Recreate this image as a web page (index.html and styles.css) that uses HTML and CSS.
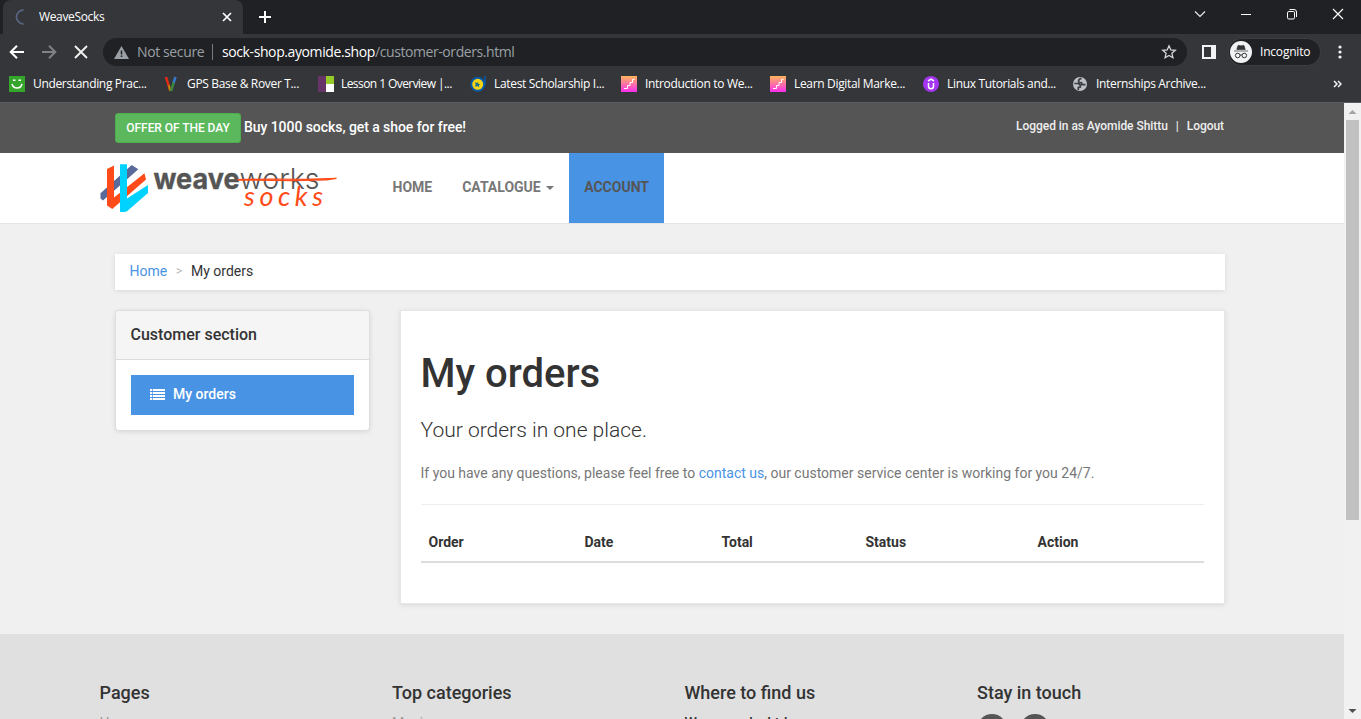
FILE: index.html
```html
<!DOCTYPE html>
<html lang="en">
<head>
<meta charset="utf-8">
<title>WeaveSocks</title>
<link rel="stylesheet" href="styles.css">
</head>
<body>
<div class="browser">
  <div class="titlebar">
    <div class="tab">
      <svg class="spinner" width="16" height="16" viewBox="0 0 16 16"><path d="M8.500 1A7 7 0 0 0 8.500 15" fill="none" stroke="#56627d" stroke-width="1.800"/></svg>
      <span class="tab-title">WeaveSocks</span>
      <svg width="10" height="10" viewBox="0 0 10 10"><path d="M1 1l8 8M9 1l-8 8" stroke="#fff" stroke-width="1.700"/></svg>
    </div>
    <svg class="new-tab" width="12" height="12" viewBox="0 0 12 12"><path d="M6 0v12M0 6h12" stroke="#fff" stroke-width="2"/></svg>
    <div class="window-controls">
      <svg width="12" height="12" viewBox="0 0 12 12"><path d="M1 3.500l5 5 5-5" fill="none" stroke="#eee" stroke-width="1.100"/></svg>
      <svg width="12" height="12" viewBox="0 0 12 12"><path d="M1 6.500h10" stroke="#fff"/></svg>
      <svg width="12" height="12" viewBox="0 0 12 12"><rect x="1.500" y="3.500" width="7" height="7.500" rx="1.300" fill="none" stroke="#fff"/><path d="M3.500 1.500h4.500a2.500 2.500 0 0 1 2.500 2.500v5" fill="none" stroke="#fff"/></svg>
      <svg width="12" height="12" viewBox="0 0 12 12"><path d="M1 1l10 10M11 1L1 11" stroke="#fff" stroke-width="1.200"/></svg>
    </div>
  </div>
  <div class="toolbar">
    <svg width="16" height="16" viewBox="0 0 16 16"><path d="M15 8H2M8 1.700L1.700 8 8 14.300" fill="none" stroke="#fff" stroke-width="2"/></svg>
    <svg width="16" height="16" viewBox="0 0 16 16"><path d="M1 8h13M8 1.700L14.300 8 8 14.300" fill="none" stroke="#818286" stroke-width="2"/></svg>
    <svg width="16" height="16" viewBox="0 0 16 16"><path d="M2 2l12 12M14 2L2 14" stroke="#f1f1f1" stroke-width="1.900"/></svg>
    <div class="omnibox">
      <svg width="15" height="13" viewBox="0 0 15 13"><path d="M7.500 0L15 13H0z" fill="#9aa0a6"/><path d="M7.500 4.500v4M7.500 9.500v1.600" stroke="#202124" stroke-width="1.500"/></svg>
      <span class="not-secure">Not secure</span>
      <span class="divider"></span>
      <span class="host">sock-shop.ayomide.shop</span><span class="path">/customer-orders.html</span>
      <svg class="star" width="16" height="16" viewBox="0 0 16 16"><path d="M8 1.800l1.800 4.100 4.500.4-3.400 3 1 4.400L8 11.400l-3.900 2.300 1-4.400-3.400-3 4.500-.4z" fill="none" stroke="#d5d7da" stroke-width="1.300"/></svg>
    </div>
    <svg class="panel-icon" width="14" height="14" viewBox="0 0 14 14"><rect width="14" height="14" fill="#f1f3f4"/><path d="M2 2h7v10H2z" fill="#35363a"/></svg>
    <div class="incognito">
      <svg width="22" height="22" viewBox="0 0 22 22"><circle cx="11" cy="11" r="11" fill="#f1f3f4"/><path d="M6.800 8.500l1-3.500q.5-1 1.500-.6l1.700.5 1.700-.5q1-.4 1.500.6l1 3.500zM4 10h14" fill="#35363a" stroke="#35363a" stroke-width=".7"/><g fill="none" stroke="#35363a"><circle cx="7.700" cy="14.500" r="2.300"/><circle cx="14.300" cy="14.500" r="2.300"/><path d="M10 14.200q1-.8 2 0"/></g></svg>
      <span>Incognito</span>
    </div>
    <svg class="menu-dots" width="4" height="14" viewBox="0 0 4 14" fill="#f1f3f4"><circle cx="2" cy="2" r="1.600"/><circle cx="2" cy="7" r="1.600"/><circle cx="2" cy="12" r="1.600"/></svg>
  </div>
  <div class="bookmarks">
    <div class="bookmark"><svg width="16" height="16" viewBox="0 0 16 16"><rect width="16" height="16" fill="#36a52b"/><g fill="none" stroke="#fff" stroke-width="1.500"><path d="M4 4.300h2.500M9.500 4.300H12M3 8q1 4 5 4T13 8"/></g></svg><span>Understanding Prac...</span></div>
    <div class="bookmark"><svg width="16" height="16" viewBox="0 0 16 16"><path d="M3 1l4 13" stroke="#e52b13" stroke-width="2.500"/><path d="M5.800 9l1.500 6" stroke="#ba840b" stroke-width="2"/><path d="M12.500 1l-2 6" stroke="#3979c7" stroke-width="2.500"/><path d="M10.700 6.500L8 15" stroke="#3c8740" stroke-width="2.500"/></svg><span>GPS Base &amp; Rover T...</span></div>
    <div class="bookmark tight"><svg width="16" height="16" viewBox="0 0 16 16"><path d="M0 0h8v16H0z" fill="#673467"/><path d="M8 0h8v8H8z" fill="#96cb29"/><path d="M8 8h8v8H8z" fill="#fff"/></svg><span>Lesson 1 Overview |...</span></div>
    <div class="bookmark"><svg width="16" height="16" viewBox="0 0 16 16"><path d="M15 0v9" stroke="#075ba8" stroke-width="1.500"/><circle cx="7.700" cy="8.300" r="6.500" fill="#f7d512" stroke="#075ba8" stroke-width="2"/><path d="M5 6l2 1 1-1 .5 2 2 .3-1.700 1 .5 2L7 10l-2 1 .6-2.500z" fill="#187195"/></svg><span>Latest Scholarship I...</span></div>
    <div class="bookmark"><svg width="16" height="16" viewBox="0 0 16 16"><defs><linearGradient id="steps" x2="0" y2="1"><stop stop-color="#ffb65d"/><stop offset="1" stop-color="#fb2cee"/></linearGradient></defs><rect width="16" height="16" fill="url(#steps)"/><path d="M3 12.500h3.500v-3H9v-3h2.500v-3h2" fill="none" stroke="#fff"/></svg><span>Introduction to We...</span></div>
    <div class="bookmark"><svg width="16" height="16" viewBox="0 0 16 16"><rect width="16" height="16" fill="url(#steps)"/><path d="M3 12.500h3.500v-3H9v-3h2.500v-3h2" fill="none" stroke="#fff"/></svg><span>Learn Digital Marke...</span></div>
    <div class="bookmark"><svg width="16" height="16" viewBox="0 0 16 16"><circle cx="8" cy="8" r="8" fill="#a435f0"/><path d="M5.500 7v3.300q0 2.500 2.500 2.500t2.500-2.500V7M5 5l3-1.800L11 5" fill="none" stroke="#fff" stroke-width="1.500"/></svg><span>Linux Tutorials and...</span></div>
    <div class="bookmark"><svg width="16" height="16" viewBox="0 0 16 16"><circle cx="8" cy="8" r="7" fill="#bdc1c6"/><path d="M9.500 2.300Q6.500 3 6.500 5.500q.5 1.500 3 1.200l.5 2h3.500M2.300 7.500h4l2 1.500v2l-2 .5V14" fill="none" stroke="#3c3d41" stroke-width="1.700"/></svg><span>Internships Archive...</span></div>
    <svg class="more" width="9" height="8" viewBox="0 0 9 8"><path d="M1 1l3 3-3 3M5 1l3 3-3 3" fill="none" stroke="#f1f3f4" stroke-width="1.500"/></svg>
  </div>
</div>

<div class="viewport">
  <div class="page">
    <div class="topbar">
      <div class="container topbar-row">
        <div class="offer"><a class="btn-offer">OFFER OF THE DAY</a><span>Buy 1000 socks, get a shoe for free!</span></div>
        <div class="account-links"><span>Logged in as Ayomide Shittu</span><span>|</span><span>Logout</span></div>
      </div>
    </div>
    <nav class="navbar">
      <svg class="logo" width="240" height="52" viewBox="0 0 240 52">
        <path d="M.5 33.300L31.700 5 38.300 9.300 3 40.500 .5 38.500z" fill="#59699a"/>
        <path d="M7 9L14 5.500V37.500L44.500 13.200 46 19.500 12.300 49 7 45.500z" fill="#ff4b19"/>
        <path d="M20 4.200h7V38.500L48 25v8L28.500 50Q27 52 24 52H20z" fill="#00d2ff"/>
        <text class="logo-bold" x="53.500" y="28.600" textLength="86" lengthAdjust="spacingAndGlyphs">weave</text>
        <text class="logo-light" x="139.500" y="28.600" textLength="80" lengthAdjust="spacingAndGlyphs">works</text>
        <text class="logo-socks" x="144" y="45.500" textLength="79" lengthAdjust="spacing">socks</text>
        <path d="M138 19.500L170 19l35 .3 31.500-1-10 1.500-35 .8-53-.5z" fill="none" stroke="#ff4b19" stroke-width="1.200"/>
      </svg>
      <div class="nav-items">
        <a>HOME</a>
        <a>CATALOGUE <i class="caret"></i></a>
        <a class="active">ACCOUNT</a>
      </div>
    </nav>
    <main class="container">
      <div class="breadcrumb"><a>Home</a><i>&gt;</i><span>My orders</span></div>
      <div class="columns">
        <aside class="panel">
          <h3>Customer section</h3>
          <div class="panel-body">
            <a class="pill"><svg width="15" height="11" viewBox="0 0 15 11"><path d="M0 1h2.300M3 1h12M0 4h2.300M3 4h12M0 7h2.300M3 7h12M0 10h2.300M3 10h12" stroke="#fff" stroke-width="2"/></svg>My orders</a>
          </div>
        </aside>
        <section class="box">
          <h1>My orders</h1>
          <p class="lead">Your orders in one place.</p>
          <p class="muted">If you have any questions, please feel free to <a>contact us</a>, our customer service center is working for you 24/7.</p>
          <hr>
          <table>
            <thead><tr><th>Order</th><th>Date</th><th>Total</th><th>Status</th><th>Action</th></tr></thead>
          </table>
        </section>
      </div>
    </main>
    <footer class="footer">
      <div class="footer-col"><h4>Pages</h4><a>Home</a></div>
      <div class="footer-col"><h4>Top categories</h4><a>Magic</a></div>
      <div class="footer-col"><h4>Where to find us</h4><strong>Weaveworks Ltd.</strong></div>
      <div class="footer-col"><h4>Stay in touch</h4><div class="social"><i></i><i></i></div></div>
    </footer>
  </div>
  <div class="scrollbar">
    <svg width="17" height="17" viewBox="0 0 17 17"><path d="M4.500 11h8l-4-4z" fill="#a3a3a3"/></svg>
    <div class="thumb"></div>
    <svg class="down" width="17" height="17" viewBox="0 0 17 17"><path d="M4.500 7h8l-4 4z" fill="#505050"/></svg>
  </div>
</div>
</body>
</html>
```

FILE: styles.css
```css
* { box-sizing: border-box; }
body { margin: 0; width: 1361px; height: 719px; overflow: hidden; display: flex; flex-direction: column; font: 14px/20px Roboto, sans-serif; color: #333; }
svg { display: block; flex: none; }
h1, h3, h4, p { margin: 0; font-weight: 500; }

/* Browser frame */
.browser { height: 103px; flex: none; background: #35363a; border-bottom: 1px solid #5b5c5f; font-family: "Open Sans", sans-serif; color: #fff; white-space: nowrap; }
.titlebar { height: 34px; display: flex; align-items: flex-start; background: #202124; padding-left: 3px; }
.tab { width: 240px; height: 34px; display: flex; align-items: center; padding: 0 11px 0 12px; background: #35363a; border-radius: 8px 8px 0 0; font-size: 12px; }
.spinner { margin-right: 8px; }
.tab-title { flex: 1; letter-spacing: -.35px; }
.new-tab { margin: 11px 0 0 16px; }
.window-controls { display: flex; gap: 34px; margin: 8px 17px 0 auto; }
.toolbar { height: 35px; display: flex; align-items: center; padding: 1px 19px 0 9px; }
.toolbar > svg + svg { margin-left: 16px; }
.omnibox { width: 1084px; height: 28px; margin-left: 14px; padding: 0 10px 0 11px; display: flex; align-items: center; border-radius: 14px; background: #202124; font-size: 14px; flex: none; }
.not-secure { color: #9aa0a6; margin-left: 8px; width: 67px; letter-spacing: -.38px; }
.divider { width: 1px; height: 16px; background: #777a7e; margin: 0 9px 0 8px; }
.host { width: 153px; letter-spacing: -.4px; }
.path { color: #9aa0a6; letter-spacing: -.42px; }
.star { margin-left: auto; }
.panel-icon { margin-left: 15px; }
.incognito { display: flex; align-items: center; width: 91px; height: 26px; margin-left: 13px; padding-left: 1px; gap: 8px; border-radius: 13px; background: #202124; font-size: 12px; letter-spacing: -.2px; box-shadow: 0 0 0 1px #3c3d41; }
.menu-dots { margin-left: auto; }
.bookmarks { display: grid; grid-template-columns: 154px 155px 152px 151px 149px 153px 149px 1fr 9px; align-items: center; height: 30px; padding: 0 19px 0 9px; font-size: 12px; letter-spacing: -.33px; }
.bookmark { display: flex; align-items: center; gap: 8px; }
.tight { letter-spacing: -.57px; gap: 7px; }

/* Page */
.viewport { flex: 1; min-height: 0; display: flex; background: #f0f0f0; }
.page { width: 1344px; overflow: hidden; }
.container { width: 1110px; margin-left: 115px; }
.topbar { height: 50px; background: #555; color: #fff; }
.topbar-row { display: flex; justify-content: space-between; padding-top: 10px; }
.offer { display: flex; align-items: flex-start; gap: 3px; height: 30px; font-weight: 500; line-height: 28px; letter-spacing: -.06px; }
.btn-offer { display: block; width: 126px; height: 30px; line-height: 28px; text-align: center; font-size: 12px; border: 1px solid #4cae4c; border-radius: 3px; background: #5cb85c; }
.account-links { display: flex; gap: 8px; font-size: 12px; font-weight: 500; line-height: 26px; color: #eee; letter-spacing: -.05px; padding-right: 1px; }
.navbar { height: 71px; display: flex; background: #fff; border-bottom: 1px solid #e4e4e4; }
.logo { margin: 7px 0 0 100px; }
.logo-bold { font: 700 29px Inter, sans-serif; fill: #555; stroke: #555; stroke-width: .4px; }
.logo-light { font: 300 29px Inter, sans-serif; fill: #555; }
.logo-socks { font: italic 400 27px Lato, sans-serif; fill: #ff4b19; }
.nav-items { display: flex; margin-left: 37px; }
.nav-items a { height: 70px; padding: 0 14.5px 0 15.5px; line-height: 69px; font-weight: 700; color: #777; }
.nav-items .active { background: #4993e4; color: #555; }
.caret { display: inline-block; border: 4px solid transparent; border-top-color: #777; border-bottom: 0; vertical-align: middle; margin-left: 2px; }
.breadcrumb { height: 36px; margin: 30px 0 20px; padding-left: 14.5px; display: flex; background: #fff; line-height: 34px; box-shadow: 0 1px 5px rgba(0,0,0,.1); }
.breadcrumb a, .muted a { color: #4993e4; }
.breadcrumb i { font-style: normal; font-size: 13px; color: #bbb; margin: 0 8.5px; }
.columns { display: flex; justify-content: space-between; align-items: flex-start; }
.panel { width: 255px; height: 121px; border: 1px solid #ddd; border-radius: 4px; background: #fff; box-shadow: 0 1px 5px rgba(0,0,0,.1); }
.panel h3 { height: 49px; padding-left: 14.5px; line-height: 47px; font-size: 16px; background: #f5f5f5; border-bottom: 1px solid #ddd; border-radius: 3px 3px 0 0; }
.panel-body { padding: 15px; }
.pill { display: flex; align-items: center; gap: 8px; height: 40px; padding: 0 0 2px 19px; background: #4993e4; color: #fff; font-weight: 500; }
.box { width: 825px; height: 294px; padding: 40px 20px 0 19.5px; border: 1px solid #e6e6e6; background: #fff; box-shadow: 0 1px 5px rgba(0,0,0,.1); }
.box h1 { font-size: 40px; line-height: 46px; }
.lead { font-size: 21px; line-height: 30px; font-weight: 300; margin-top: 18px; }
.muted { color: #777; margin-top: 18px; font-weight: 400; }
hr { margin: 21px 0 20px; border: 0; border-top: 1px solid #eee; }
table { width: 100%; border-collapse: collapse; table-layout: fixed; }
th { height: 37px; padding: 0 8px 2px; text-align: left; font-weight: 700; border-bottom: 2px solid #ddd; }
th:nth-child(1) { width: 156px; }
th:nth-child(2) { width: 137px; }
th:nth-child(3) { width: 144px; }
th:nth-child(4) { width: 172px; }
.footer { display: grid; grid-template-columns: repeat(4, 292.5px); height: 90px; margin-top: 30px; padding: 49px 0 0 99.5px; background: #e0e0e0; }
.footer h4 { font-size: 18px; line-height: 20px; margin-bottom: 10px; }
.footer a { color: #999; }
.footer strong { font-weight: 500; }
.footer a, .footer strong { display: block; }
.social { display: flex; gap: 13px; padding-top: 1px; }
.social i { width: 30px; height: 30px; border-radius: 50%; background: #555; }
.scrollbar { width: 17px; display: flex; flex-direction: column; background: #f1f1f1; }
.thumb { width: 13px; height: 400px; margin-left: 2px; background: #c1c1c1; }
.down { margin-top: auto; }
```
